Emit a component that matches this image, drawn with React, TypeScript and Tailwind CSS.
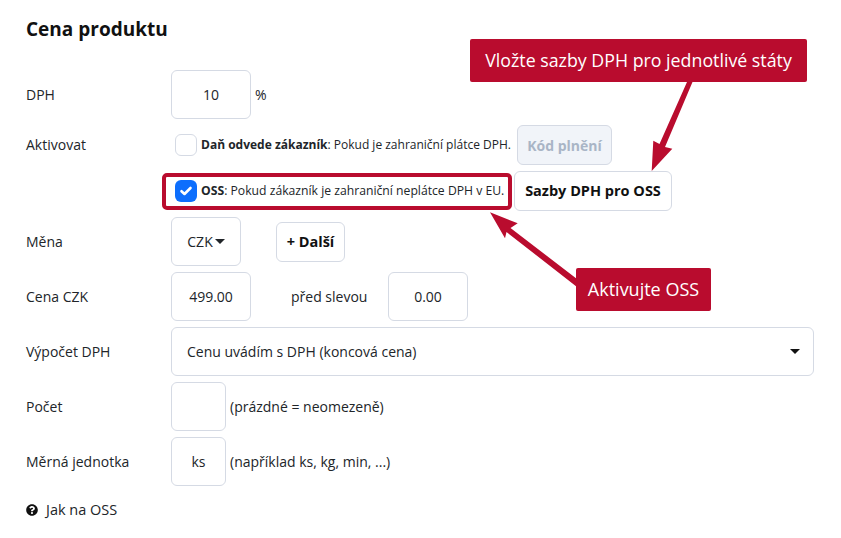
import React from "react";

const inputBox = "flex items-center justify-center h-[49px] bg-white border border-[#d5dae4] rounded-[6px] text-[14px] text-[#212529]";
const label = "w-[145px] shrink-0 text-[14px] text-[#212529]";

function Arrows() {
  return (
    <svg className="absolute left-0 top-0 pointer-events-none" width="841" height="538" viewBox="0 0 841 538">
      <path d="M687 82 L692.500 82 L665 147 L672.300 148.700 L651.700 171 L653.300 140.700 L659.500 144 Z" fill="#b90c2e" />
      <path d="M490 212.300 L517.700 223.300 L510.500 228 L577 279 L577 287 L506.500 232 L505 238.300 Z" fill="#b90c2e" />
    </svg>
  );
}

export default function App() {
  return (
    <div className="relative w-[841px] h-[538px] bg-white overflow-hidden pl-[26px] pt-[18px]" style={{ fontFamily: '"Open Sans", "Noto Sans", sans-serif' }}>
      <h2 className="text-[19px] leading-[22px] font-bold text-[#111] mb-[30px]">Cena produktu</h2>

      <div className="flex flex-col gap-[6px]">
        <div className="flex items-center">
          <div className={label}>DPH</div>
          <div className={`${inputBox} w-[80px]`}>10</div>
          <span className="ml-[4px] text-[14px] text-[#212529]">%</span>
        </div>

        <div className="flex items-center h-[40px]">
          <div className={`${label} -mt-[2px]`}>Aktivovat</div>
          <div className="ml-[4px] w-[22px] h-[22px] bg-white border border-[#d5dae4] rounded-[6px]" />
          <span className="ml-[4px] w-[316px] text-[12px] text-[#212529] whitespace-nowrap"><b>Daň odvede zákazník</b>: Pokud je zahraniční plátce DPH.</span>
          <div className="flex items-center justify-center w-[95px] h-[40px] bg-[#f1f4f9] border border-[#d5dae4] rounded-[6px] text-[14px] font-bold text-[#a9b5c6]">Kód plnění</div>
        </div>

        <div className="flex items-center h-[40px] pl-[136px]">
          <div className="flex items-center w-[350px] h-[37px] border-[4px] border-[#b90c2e] rounded-[5px] pl-[9px]">
            <div className="flex items-center justify-center w-[22px] h-[22px] shrink-0 bg-[#0d6efd] rounded-[6px]">
              <svg width="14" height="14" viewBox="0 0 14 14" fill="none">
                <path d="M2.500 7.200 L5.500 10 L11.500 4" stroke="white" strokeWidth="2.600" strokeLinecap="round" strokeLinejoin="round" />
              </svg>
            </div>
            <span className="ml-[4px] text-[12.2px] text-[#212529] whitespace-nowrap"><b>OSS</b>: Pokud zákazník je zahraniční neplátce DPH v EU.</span>
          </div>
          <div className="ml-[2px] flex items-center justify-center w-[158px] h-[40px] bg-white border border-[#d5dae4] rounded-[6px] text-[14.5px] font-bold text-[#111]">Sazby DPH pro OSS</div>
        </div>

        <div className="flex items-center">
          <div className={label}>Měna</div>
          <div className={`${inputBox} w-[70px] gap-[2px]`}>
            CZK
            <span className="w-0 h-0 border-x-[5px] border-x-transparent border-t-[5px] border-t-[#212529]" />
          </div>
          <div className="ml-[35px] flex items-center justify-center w-[69px] h-[40px] bg-white border border-[#d5dae4] rounded-[6px] text-[14.5px] font-bold text-[#111]">+ Další</div>
        </div>

        <div className="flex items-center">
          <div className={label}>Cena CZK</div>
          <div className={`${inputBox} w-[80px]`}>499.00</div>
          <span className="ml-[40px] w-[97px] text-[14px] text-[#212529]">před slevou</span>
          <div className={`${inputBox} w-[80px]`}>0.00</div>
        </div>

        <div className="flex items-center">
          <div className={label}>Výpočet DPH</div>
          <div className={`${inputBox} w-[643px] !justify-between pl-[15px] pr-[13px]`}>
            Cenu uvádím s DPH (koncová cena)
            <span className="w-0 h-0 border-x-[5px] border-x-transparent border-t-[5px] border-t-[#111]" />
          </div>
        </div>

        <div className="flex items-center">
          <div className={label}>Počet</div>
          <div className={`${inputBox} w-[55px]`} />
          <span className="ml-[4px] text-[14px] text-[#212529]">(prázdné = neomezeně)</span>
        </div>

        <div className="flex items-center">
          <div className={label}>Měrná jednotka</div>
          <div className={`${inputBox} w-[55px]`}>ks</div>
          <span className="ml-[4px] text-[14px] text-[#212529]">(například ks, kg, min, ...)</span>
        </div>
      </div>

      <div className="mt-[13px] flex items-center text-[14.5px] text-[#212529]">
        <svg width="12" height="12" viewBox="0 0 512 512" fill="#111">
          <path d="M504 256c0 137-111 248-248 248S8 393 8 256 119 8 256 8s248 111 248 248zM262.700 90c-54.500 0-89.300 23-116.600 63.800-3.500 5.300-2.400 12.400 2.700 16.300l34.700 26.300c5.200 3.900 12.600 3 16.700-2.100 17.900-22.700 30.100-35.800 57.300-35.800 20.400 0 45.700 13.100 45.700 33 0 15-12.400 22.700-32.600 34-23.600 13.200-54.800 29.700-54.800 70.900V300c0 6.600 5.400 12 12 12h56c6.600 0 12-5.400 12-12v-1.300c0-28.600 83.400-29.700 83.400-107.100 0-58.200-60.400-102.300-116.700-102.300zM256 340c-24.300 0-44 19.700-44 44s19.700 44 44 44 44-19.700 44-44-19.700-44-44-44z" />
        </svg>
        <span className="ml-[8px]">Jak na OSS</span>
      </div>

      <Arrows />
      <div className="absolute left-[470px] top-[39px] w-[337px] h-[43px] bg-[#b90c2e] rounded-[2px] flex items-center justify-center text-[17.8px] text-white whitespace-nowrap">Vložte sazby DPH pro jednotlivé státy</div>
      <div className="absolute left-[576px] top-[268px] w-[135px] h-[43px] bg-[#b90c2e] rounded-[2px] flex items-center justify-center text-[18px] text-white whitespace-nowrap">Aktivujte OSS</div>
    </div>
  );
}
